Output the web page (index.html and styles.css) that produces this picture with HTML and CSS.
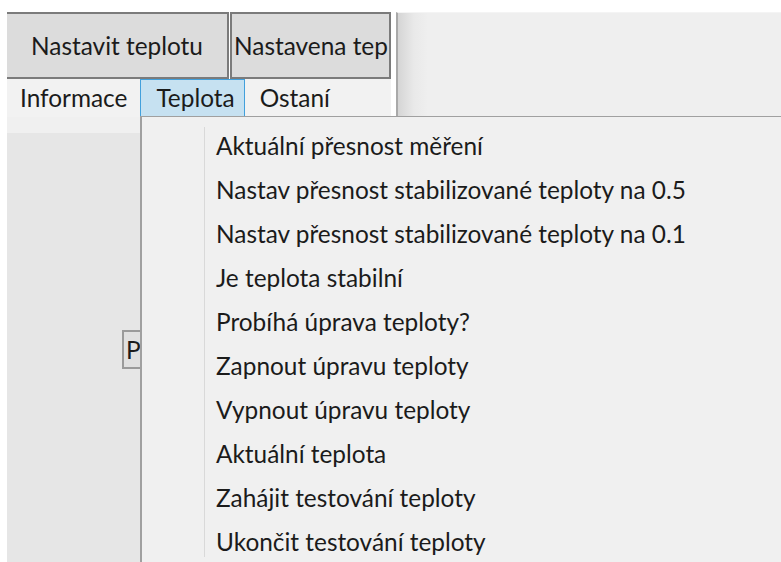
FILE: index.html
```html
<!DOCTYPE html>
<html lang="cs">
<head>
<meta charset="utf-8">
<title>Teplota</title>
<link rel="stylesheet" href="styles.css">
</head>
<body>
<div class="app">
  <div class="top">
    <div class="left-col">
      <div class="buttons">
        <button class="btn btn-first">Nastavit teplotu</button>
        <button class="btn btn-second">Nastavena tep</button>
      </div>
      <nav class="menubar">
        <span class="menu-title">Informace</span>
        <span class="menu-title is-open">Teplota</span>
        <span class="menu-title menu-last">Ostaní</span>
      </nav>
    </div>
    <div class="gap"></div>
    <div class="side-panel"></div>
  </div>
  <div class="content">
    <div class="client">
      <div class="client-strip"></div>
      <div class="client-body">
        <button class="btn btn-small">P</button>
      </div>
    </div>
  </div>

  <div class="dropdown">
    <div class="gutter"></div>
    <ul class="items">
      <li>Aktuální přesnost měření</li>
      <li>Nastav přesnost stabilizované teploty na 0.5</li>
      <li>Nastav přesnost stabilizované teploty na 0.1</li>
      <li>Je teplota stabilní</li>
      <li>Probíhá úprava teploty?</li>
      <li>Zapnout úpravu teploty</li>
      <li>Vypnout úpravu teploty</li>
      <li>Aktuální teplota</li>
      <li>Zahájit testování teploty</li>
      <li>Ukončit testování teploty</li>
    </ul>
  </div>
</div>
</body>
</html>
```
FILE: styles.css
```css
* {
  box-sizing: border-box;
}

html, body {
  margin: 0;
  padding: 0;
  background: #ffffff;
}

body {
  font-family: "Lato", "Noto Sans", sans-serif;
  font-size: 24.4px;
  color: #1b1b1b;
  width: 781px;
  height: 562px;
  overflow: hidden;
}

.app {
  position: relative;
  height: 562px;
  padding: 12px 0 0 7px;
  display: flex;
  flex-direction: column;
}

/* toolbar row: buttons + menu strip on the left, splitter panel on the right */
.top {
  display: flex;
  height: 105px;
}

.left-col {
  width: 384px;
  display: flex;
  flex-direction: column;
}

.buttons {
  display: flex;
  height: 67px;
}

.btn {
  font: inherit;
  color: inherit;
  background: #dcdcdc;
  border: 2px solid #7b7b7b;
  margin: 0;
  padding: 0;
  white-space: nowrap;
  overflow: hidden;
}

.btn-first {
  width: 222px;
  border-left: none;
  text-align: center;
}

.btn-second {
  width: 161px;
  margin-left: 1px;
  text-align: left;
  padding-left: 2px;
}

.menubar {
  height: 38px;
  background: #f2f2f2;
  display: flex;
  align-items: stretch;
  padding-left: 1px;
}

.menu-title {
  display: flex;
  align-items: center;
  padding: 0 12px 1px 11px;
  border: 1px solid transparent;
}

.menu-title.is-open {
  background: #c6e1f1;
  border-color: #42a0dc;
  padding: 0 9px 1px 15px;
}

.menu-title.menu-last {
  padding-left: 14px;
}

.gap {
  width: 5px;
}

.side-panel {
  flex: 1;
  border-left: 2px solid #a9a9a9;
  border-top: 1px solid #f4f4f4;
  background: linear-gradient(to right, #d5d5d5 0, #e9e9e9 16px, #efefef 30px, #efefef 100%);
}

/* form area below the menu */
.content {
  flex: 1;
  display: flex;
}

.client {
  width: 133px;
  display: flex;
  flex-direction: column;
}

.client-strip {
  height: 16px;
  background: #f0f0f0;
}

.client-body {
  flex: 1;
  background: #e6e6e6;
  padding: 197px 0 0 115px;
}

.btn-small {
  width: 40px;
  height: 39px;
  border: 2px solid #9a9a9a;
  background: #e0e0e0;
  text-align: left;
  padding-left: 2px;
}

/* open drop-down of the "Teplota" menu */
.dropdown {
  position: absolute;
  left: 140px;
  top: 116px;
  right: -20px;
  height: 470px;
  background: #f0f0f0;
  border-left: 2px solid #a0a0a0;
  border-top: 1px solid #a0a0a0;
  padding-top: 10px;
  display: flex;
  align-items: flex-start;
}

.gutter {
  width: 62px;
}

.items {
  list-style: none;
  margin: 0;
  padding: 0;
  height: 430px;
  border-left: 1px solid #d9d9d9;
}

.items li {
  height: 44px;
  line-height: 38px;
  padding-left: 11px;
  white-space: nowrap;
}
```
